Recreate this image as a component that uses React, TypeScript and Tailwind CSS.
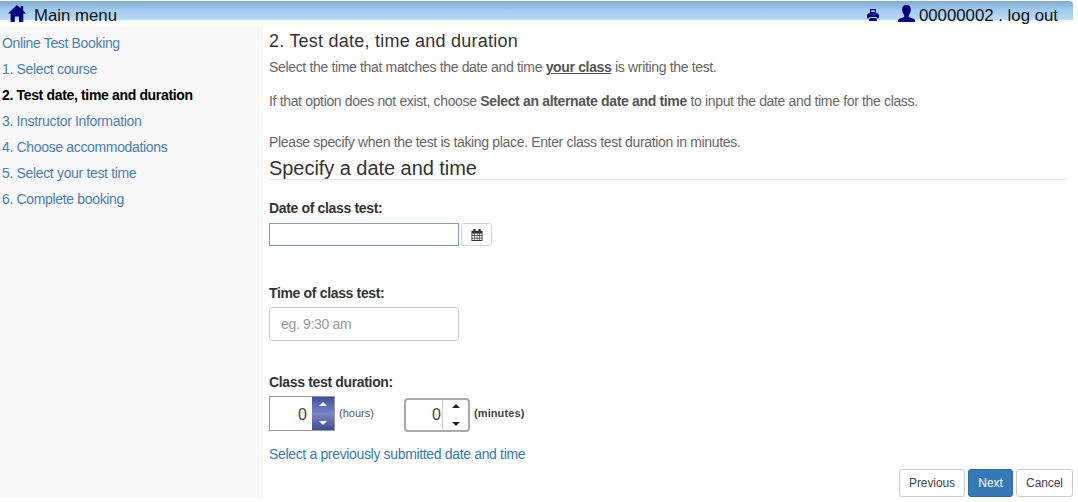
import type { ReactNode } from "react";

const steps = [
  { label: "Online Test Booking" },
  { label: "1. Select course" },
  { label: "2. Test date, time and duration", current: true },
  { label: "3. Instructor Information" },
  { label: "4. Choose accommodations" },
  { label: "5. Select your test time" },
  { label: "6. Complete booking" },
];

function HomeIcon() {
  return (
    <svg className="h-[17px] w-[18px]" viewBox="0 0 18 17" fill="#00007d">
      <path d="M9 0 0 8.600h2.600V17h4.200v-5.600h4.200V17h4.300V8.600H18l-2.800-2.800V1h-2.600v2.400z" />
    </svg>
  );
}

function PrintIcon() {
  return (
    <svg className="h-[12px] w-[12px]" viewBox="0 0 12 12" fill="#00007d">
      <path d="M3 0h6v5H3zM4.200 1.300V3h3.600V1.300z" fillRule="evenodd" />
      <path d="M1.500 4.200h1.700v1h5.600v-1h1.700L12 6v3.300H10.300L9.500 8h-7L1.700 9.300H0V6z" />
      <path d="M2.800 9h6.400l1 3H1.800z" />
    </svg>
  );
}

function UserIcon() {
  return (
    <svg className="h-[17px] w-[17px]" viewBox="0 0 17 17" fill="#00007d">
      <path d="M8.500 0C5.600 0 4.200 1.600 4.200 4.400c0 2.600.8 4.400 2 5.600v2C4 13 0 13.600 0 15.600V17h17v-1.400c0-2-4-2.600-6.200-3.600v-2c1.200-1.200 2-3 2-5.600C12.800 1.600 11.400 0 8.500 0z" />
    </svg>
  );
}

function CalendarIcon() {
  return (
    <svg className="h-[12px] w-[12px]" viewBox="0 0 12 13">
      <path fill="#333" d="M0 2h12v11H0z" />
      <path fill="#333" d="M2 0h2.500v3H2zM7.500 0H10v3H7.500z" />
      <path fill="#fff" d="M1 5h2v1.800H1zM3.700 5h2v1.800h-2zM6.400 5h2v1.800h-2zM9.100 5h2v1.800h-2zM1 7.500h2v1.900H1zM3.700 7.500h2v1.900h-2zM6.400 7.500h2v1.900h-2zM9.100 7.500h2v1.900h-2zM1 10.200h2V12H1zM3.700 10.200h2V12h-2zM6.400 10.200h2V12h-2zM9.100 10.200h2V12h-2z" />
    </svg>
  );
}

function Arrow({ down = false }: { down?: boolean }) {
  return (
    <svg className="h-1 w-[8px]" viewBox="0 0 8 4" fill="currentColor">
      <path d={down ? "M0 0h8L4 4z" : "M0 4h8L4 0z"} />
    </svg>
  );
}

function Label({ children }: { children: ReactNode }) {
  return <div className="h-5 leading-5 font-bold text-[#333]">{children}</div>;
}

export default function App() {
  return (
    <div className="flex h-[502px] w-[1078px] flex-col overflow-hidden bg-white font-['Liberation_Sans',Arial,sans-serif] text-[14px] tracking-[-0.34px] text-[#666]">
      <header className="mt-px mr-[5px] flex h-[19px] shrink-0 items-start justify-between rounded-tr-[4px] bg-linear-to-b from-[#7fa9cf] via-[#a3cdf0] to-[#b9dbf6] text-[16.8px] leading-[29px] tracking-normal text-[#111]">
        <a className="flex items-start pl-2">
          <span className="mt-[4px]"><HomeIcon /></span>
          <span className="ml-2">Main menu</span>
        </a>
        <div className="flex items-start pr-[15px]">
          <span className="mt-[8px] mr-[19px]"><PrintIcon /></span>
          <span className="mt-[4px] mr-[4px]"><UserIcon /></span>
          <span>00000002 . log out</span>
        </div>
      </header>
      <div className="mt-[6px] flex h-[472px]">
        <nav className="flex w-[263px] flex-col bg-[#f8f8f8] pt-[4px] pl-[2px]">
          {steps.map((s) => (
            <a key={s.label} className={s.current ? "h-[26px] leading-[26px] font-bold text-black" : "h-[26px] leading-[26px] text-[#4a7fb5]"}>
              {s.label}
            </a>
          ))}
        </nav>
        <main className="flex flex-1 flex-col pl-[6px]">
          <h1 className="h-[30px] text-[18px] leading-[30px] tracking-[0.23px] text-[#333]">2. Test date, time and duration</h1>
          <p className="h-[22px] leading-[22px]">Select the time that matches the date and time <b className="text-[#555] underline">your class</b> is writing the test.</p>
          <p className="mt-3 h-[22px] leading-[22px]">If that option does not exist, choose <b className="text-[#555]">Select an alternate date and time</b> to input the date and time for the class.</p>
          <p className="mt-[19px] h-[22px] leading-[22px]">Please specify when the test is taking place. Enter class test duration in minutes.</p>
          <h2 className="mr-[12px] h-[27px] border-b border-[#e5e5e5] text-[20px] leading-[30px] tracking-[-0.05px] text-[#333]">Specify a date and time</h2>
          <div className="mt-[18px]"><Label>Date of class test:</Label></div>
          <div className="mt-[5px] flex gap-[2px]">
            <div className="h-[23px] w-[190px] border border-[#7f9db9]" />
            <button className="flex h-[23px] w-[31px] items-center justify-center rounded-[3px] border border-[#d5d5d5]"><CalendarIcon /></button>
          </div>
          <div className="mt-[37px]"><Label>Time of class test:</Label></div>
          <div className="mt-[4px] h-[34px] w-[190px] rounded-[4px] border border-[#ccc] pl-[11px] leading-[32px] text-[#999]">eg. 9:30 am</div>
          <div className="mt-[31px]"><Label>Class test duration:</Label></div>
          <div className="mt-[4px] flex h-9 text-[11px] leading-[34px] tracking-normal">
            <div className="flex h-[35px] w-[66px] border border-[#999]">
              <span className="flex-1 pr-[5px] text-right text-[16px] leading-[35px] text-[#444]">0</span>
              <span className="flex w-[22px] flex-col items-center justify-between bg-linear-to-b from-[#3c4da0] via-[#7c88c4] to-[#3c4da0] py-[5px] text-white"><Arrow /><Arrow down /></span>
            </div>
            <span className="ml-1 w-[65px] text-[#555]">(hours)</span>
            <div className="mt-[2px] flex h-[34px] w-[66px] rounded-[4px] border-2 border-[#aaa] leading-[29px]">
              <span className="w-[37px] border-r border-[#ccc] pr-px text-right text-[16px] text-[#444]">0</span>
              <span className="flex flex-1 flex-col items-center justify-between py-1 text-[#222]"><Arrow /><Arrow down /></span>
            </div>
            <b className="ml-1 tracking-[0.1px] text-[#444]">(minutes)</b>
          </div>
          <a className="mt-3 h-5 leading-5 text-[#337ab7]">Select a previously submitted date and time</a>
          <div className="mt-[5px] mr-[5px] flex justify-end gap-[3px] text-[12px] leading-[26px] tracking-[-0.1px] text-[#444]">
            <button className="h-[28px] w-[66px] rounded-[3px] border border-[#ccc]">Previous</button>
            <button className="h-[28px] w-[45px] rounded-[3px] border border-[#2e6da4] bg-[#337ab7] text-white">Next</button>
            <button className="h-[28px] w-[57px] rounded-[3px] border border-[#ccc]">Cancel</button>
          </div>
        </main>
      </div>
    </div>
  );
}
